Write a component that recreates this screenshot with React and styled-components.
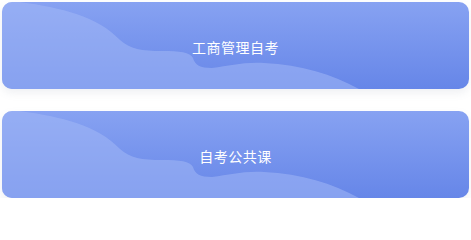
import * as React from 'react';
import styled, { createGlobalStyle } from 'styled-components';

const GlobalStyle = createGlobalStyle`
  body {
    margin: 0;
    background: #ffffff;
    font-family: 'Noto Sans CJK SC', 'Noto Sans', sans-serif;
  }
`;

const courses = ['工商管理自考', '自考公共课'];

export default function App() {
  return (
    <>
      <GlobalStyle />
      <List>
        {courses.map((name) => (
          <Card key={name}>
            <Wave viewBox="0 0 467 87" preserveAspectRatio="none">
              <path
                d="M0 0 L18 0 C60 6 95 14 118 38 C128 47 140 49 160 49 C178 49 188 50 191 56 C193 63 198 66 210 66 C228 64 240 60 262 61 C300 63 330 72 357 87 L0 87 Z"
                fill="#a3b8f6"
                fillOpacity="0.55"
              />
            </Wave>
            <Title>{name}</Title>
          </Card>
        ))}
      </List>
    </>
  );
}

const List = styled.div`
  display: flex;
  flex-direction: column;
  gap: 22px;
  padding: 2px 2px 0 2px;
`;

const Card = styled.div`
  position: relative;
  height: 87px;
  border-radius: 10px;
  overflow: hidden;
  display: flex;
  align-items: center;
  justify-content: center;
  background: linear-gradient(180deg, #87a2f2 0%, #6686e8 100%);
  box-shadow: 0 4px 8px rgba(120, 130, 160, 0.12);
`;

const Wave = styled.svg`
  position: absolute;
  inset: 0;
  width: 100%;
  height: 100%;
`;

const Title = styled.span`
  position: relative;
  color: #ffffff;
  font-size: 14px;
  letter-spacing: 0.5px;
  margin-top: 2px;
`;
